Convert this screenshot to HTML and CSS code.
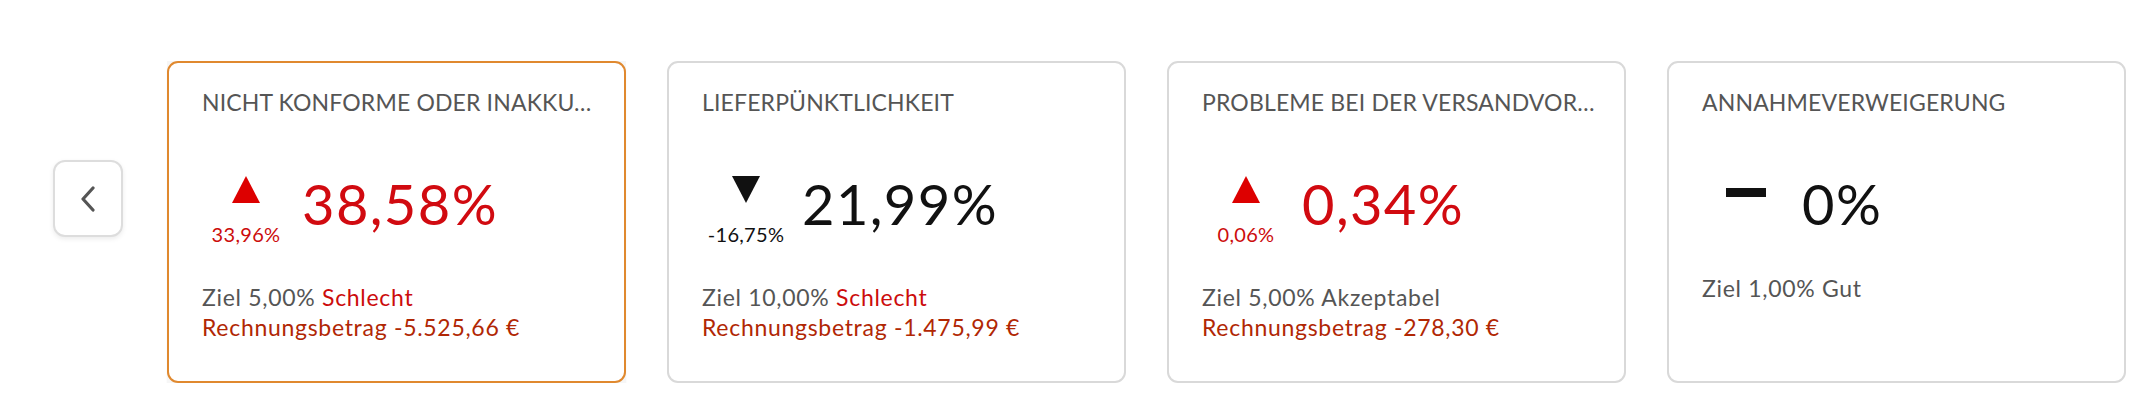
FILE: index.html
```html
<!DOCTYPE html>
<html lang="de">
  <head>
    <meta charset="UTF-8" />
    <meta name="viewport" content="width=device-width, initial-scale=1.0" />
    <title>Kontozustand</title>
    <link rel="stylesheet" href="styles.css">
  </head>
  <body>
    <div class="carousel">
      <button class="nav-btn" type="button" aria-label="Zurück">
        <svg width="16" height="26" viewBox="0 0 16 26">
          <polyline points="13,2 3,13 13,24" fill="none" stroke="#555" stroke-width="3.2" stroke-linecap="round" stroke-linejoin="round" />
        </svg>
      </button>

      <div class="cards">
        <div class="card-wrap is-active">
          <div class="card is-active">
            <div class="card-title">NICHT KONFORME ODER INAKKU…</div>
            <div class="metric">
              <div class="trend">
                <svg class="arrow" width="28" height="27" viewBox="0 0 28 27"><polygon points="14,0 28,27 0,27" fill="#dd0000" /></svg>
                <span class="delta bad">33,96%</span>
              </div>
              <div class="value bad">38,58%</div>
            </div>
            <div class="card-foot">
              <div>Ziel 5,00% <span class="status bad">Schlecht</span></div>
              <div class="invoice">Rechnungsbetrag -5.525,66 €</div>
            </div>
          </div>
        </div>

        <div class="card-wrap">
          <div class="card">
            <div class="card-title">LIEFERPÜNKTLICHKEIT</div>
            <div class="metric">
              <div class="trend">
                <svg class="arrow" width="28" height="27" viewBox="0 0 28 27"><polygon points="0,0 28,0 14,27" fill="#111" /></svg>
                <span class="delta">-16,75%</span>
              </div>
              <div class="value">21,99%</div>
            </div>
            <div class="card-foot">
              <div>Ziel 10,00% <span class="status bad">Schlecht</span></div>
              <div class="invoice">Rechnungsbetrag -1.475,99 €</div>
            </div>
          </div>
        </div>

        <div class="card-wrap">
          <div class="card">
            <div class="card-title">PROBLEME BEI DER VERSANDVOR…</div>
            <div class="metric">
              <div class="trend">
                <svg class="arrow" width="28" height="27" viewBox="0 0 28 27"><polygon points="14,0 28,27 0,27" fill="#dd0000" /></svg>
                <span class="delta bad">0,06%</span>
              </div>
              <div class="value bad">0,34%</div>
            </div>
            <div class="card-foot">
              <div>Ziel 5,00% Akzeptabel</div>
              <div class="invoice">Rechnungsbetrag -278,30 €</div>
            </div>
          </div>
        </div>

        <div class="card-wrap">
          <div class="card">
            <div class="card-title">ANNAHMEVERWEIGERUNG</div>
            <div class="metric">
              <div class="trend">
                <span class="flat"></span>
              </div>
              <div class="value">0%</div>
            </div>
            <div class="card-foot">
              <div>Ziel 1,00% Gut</div>
            </div>
          </div>
        </div>
      </div>
    </div>
  </body>
</html>
```

FILE: styles.css
```css
body {
  margin: 0;
  background: #ffffff;
  font-family: Lato, "Noto Sans", Arial, sans-serif;
  color: #111111;
}

.carousel {
  display: flex;
  align-items: flex-start;
  gap: 44px;
  padding: 61px 0 0 53px;
}

.nav-btn {
  width: 70px;
  height: 77px;
  margin-top: 99px;
  display: flex;
  align-items: center;
  justify-content: center;
  padding: 0;
  background: #ffffff;
  border: 2px solid #dddddd;
  border-radius: 12px;
  box-shadow: 0 2px 5px rgba(0, 0, 0, 0.08);
  cursor: pointer;
}

.cards {
  display: flex;
  gap: 41px;
}

.card-wrap {
  width: 459px;
}

.card-wrap.is-active {
  background: #f6f6f6;
  box-shadow: 0 5px 3px -2px rgba(0, 0, 0, 0.22);
}

.card {
  box-sizing: border-box;
  height: 322px;
  padding: 25px 32px 0 33px;
  background: #ffffff;
  border: 2px solid #d9d9d9;
  border-radius: 11px;
}

.card.is-active {
  border-color: #e0892f;
}

.card-title {
  font-size: 23px;
  line-height: 28px;
  letter-spacing: 0.15px;
  color: #555555;
  white-space: nowrap;
}

.metric {
  display: flex;
  align-items: flex-start;
  gap: 12px;
  margin-top: 54px;
}

.trend {
  width: 88px;
  padding-top: 6px;
  display: flex;
  flex-direction: column;
  align-items: center;
}

.arrow {
  display: block;
}

.delta {
  margin-top: 19px;
  font-size: 20px;
  line-height: 24px;
  letter-spacing: 0.3px;
  color: #111111;
}

.flat {
  display: block;
  width: 40px;
  height: 9px;
  margin-top: 12px;
  background: #111111;
}

.value {
  font-size: 56px;
  line-height: 1.2;
  letter-spacing: 1.4px;
  color: #111111;
}

.bad {
  color: #cc0c0c;
}

.value.bad {
  color: #d10a10;
}

.card-foot {
  margin-top: 36px;
  font-size: 23px;
  line-height: 30px;
  letter-spacing: 0.7px;
  color: #555555;
}

.status.bad {
  color: #cc0c0c;
}

.invoice {
  color: #b12704;
}
```
